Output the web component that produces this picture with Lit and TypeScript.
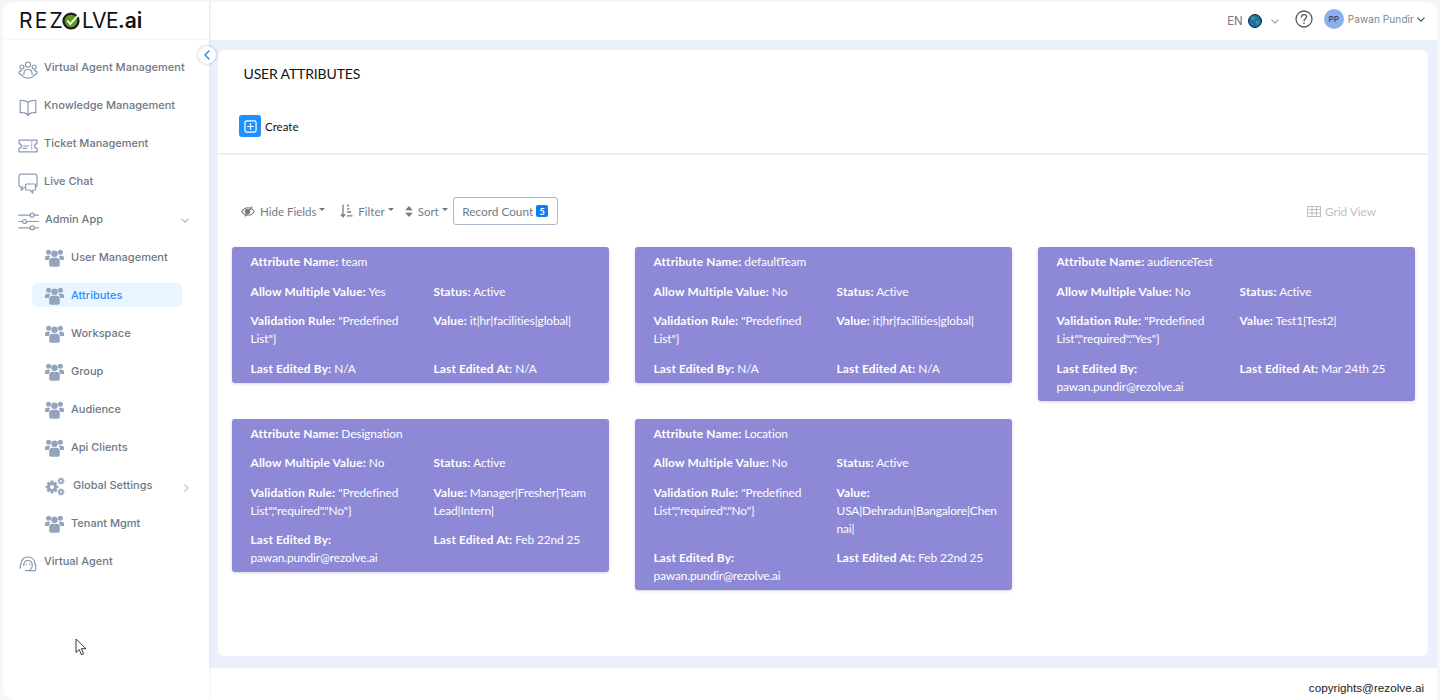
import { LitElement, html, css, svg } from "lit";
import { customElement } from "lit/decorators.js";

const ic = (w: number, h: number, vb: string, body: unknown, cls = "") =>
  html`<svg class=${cls} width=${w} height=${h} viewBox=${vb} aria-hidden="true">${body}</svg>`;

const stroke = (b: unknown) => svg`<g fill="none" stroke="currentColor" stroke-width="1.200" stroke-linecap="round" stroke-linejoin="round">${b}</g>`;

const icons: Record<string, () => unknown> = {
  agents: () => ic(20, 18, "0 0 20 18", stroke(svg`
    <circle cx="10" cy="3.600" r="2.600"/><circle cx="3.900" cy="6" r="2"/><circle cx="16.100" cy="6" r="2"/>
    <path d="M5.800 13.500c0-3.200 1.900-5 4.200-5s4.200 1.800 4.200 5"/>
    <path d="M3.600 9.300C2 9.500 1 10.700 1 12.200c0 .9.800 1.300 2 1.500M16.400 9.300c1.600.2 2.600 1.400 2.600 2.900 0 .9-.8 1.300-2 1.500"/>
    <path d="M3.400 13.800c1.400 2.400 4 3.300 6.600 3.300s5.200-.9 6.600-3.300"/>`)),
  book: () => ic(18, 17, "0 0 18 17", stroke(svg`
    <path d="M9 3.200C7.400 1.800 4.500 1.300 1.200 1.500v12.200c3.200-.2 6 .3 7.800 1.700 1.800-1.400 4.600-1.900 7.800-1.700V1.500C13.500 1.300 10.600 1.800 9 3.200z"/>
    <path d="M9 3.200v12.200M7.800 15.400 9 16.500l1.200-1.100"/>`)),
  ticket: () => ic(20, 14, "0 0 20 14", stroke(svg`
    <path d="M1 1.200h18v3.400a2.400 2.400 0 0 0 0 4.800v3.400H1V9.400a2.400 2.400 0 0 0 0-4.800z"/>
    <path d="M13.700 2.800v1M13.700 5.800v1M13.700 8.800v1M5 7h5.500M5 9.400h3.500"/>`)),
  chat: () => ic(21, 22, "0 0 21 22", stroke(svg`
    <path d="M4.500 13.900H2.900a1.900 1.900 0 0 1-1.900-1.900V3A1.900 1.900 0 0 1 2.900 1.100h14.200A1.900 1.900 0 0 1 19 3v9a1.900 1.900 0 0 1-1.900 1.900"/>
    <path d="M3.300 13.900v3.400l3-2.700"/>
    <path d="M8.500 11h8.200c.6 0 1 .4 1 1v4c0 .6-.4 1-1 1h-1.900v3.100L12 17H8.500c-.6 0-1-.4-1-1v-4c0-.6.4-1 1-1z"/>`)),
  sliders: () => ic(21, 19, "0 0 21 19", stroke(svg`
    <path d="M.7 3.200h11.500M16.300 3.200h4M.7 9.500h3.800M8.500 9.500h11.800M.7 15.800h11.500M16.300 15.800h4"/>
    <circle cx="14.200" cy="3.200" r="2"/><circle cx="6.500" cy="9.500" r="2"/><circle cx="14.200" cy="15.800" r="2"/>`)),
  users: () => ic(19, 18, "0 0 19 18", svg`<g fill="currentColor">
    <circle cx="3.600" cy="3.300" r="2.500"/><circle cx="15.400" cy="3.300" r="2.500"/><circle cx="9.500" cy="4.700" r="3.300"/>
    <path d="M0 11V8.800c0-1.300 1-2 2-2h2.600c.3 0 .6 0 .8.200-.9.900-1.300 2.200-1.300 4H0zM19 11V8.800c0-1.300-1-2-2-2h-2.600c-.3 0-.6 0-.8.200.9.900 1.300 2.200 1.300 4H19z"/>
    <path d="M4.200 16v-3.800c0-2.300 1.300-3.500 3-3.500h4.600c1.700 0 3 1.200 3 3.500V16c0 1-.8 1.700-1.700 1.700H5.900c-.9 0-1.700-.7-1.700-1.700z"/></g>`),
  gears: () => ic(20, 19, "0 0 20 19", svg`
    <g fill="none" stroke="currentColor"><circle cx="7" cy="10" r="3.600" stroke-width="3"/>
    <path stroke-width="2.600" d="M7 3.600v2M7 14.400v2M.6 10h2M11.400 10h2M2.500 5.500l1.400 1.400M10.100 13.100l1.400 1.400M2.500 14.500l1.400-1.400M10.100 6.900l1.400-1.400"/>
    <circle cx="16" cy="4" r="1.900" stroke-width="1.600"/><path stroke-width="1.400" d="M16 .6v1M16 6.400v1M12.600 4h1M18.400 4h1M13.600 1.600l.7.700M17.700 5.700l.7.700M13.600 6.400l.7-.7M17.700 2.300l.7-.7"/>
    <circle cx="16" cy="15" r="1.900" stroke-width="1.600"/><path stroke-width="1.400" d="M16 11.600v1M16 17.400v1M12.600 15h1M18.400 15h1M13.600 12.600l.7.700M17.700 16.700l.7.700M13.600 17.400l.7-.7M17.700 13.300l.7-.7"/></g>`),
  headset: () => ic(18, 16, "0 0 18 16", stroke(svg`
    <path d="M2 8.500C2 3.900 4.900 1 9 1s7 2.900 7 7.500"/>
    <path d="M4.700 9.500C4.700 6.200 6.500 4.400 9 4.400s4.300 1.800 4.300 5.100c0 2-1 3.600-2.300 4.500"/>
    <path d="M1.300 8.500v3.800M16.700 8.500v5c0 .7-.4 1.100-1 1.100H6.500"/>
    <path d="M7.300 8.200h.1M10.700 8.200h.1" stroke-width="1.400"/>`)),
};

const chev = (dir: "down" | "right" | "left", cls: string) => {
  const d = dir === "down" ? "M1 1l4 4 4-4" : dir === "right" ? "M1 1l4 4-4 4" : "M5 1 1 5l4 4";
  const [w, h] = dir === "down" ? [10, 6] : [6, 10];
  const [dw, dh] = dir === "down" ? [8, 5] : dir === "right" ? [5, 8] : [6, 10];
  return html`<svg class=${cls} width=${dw} height=${dh} viewBox="0 0 ${w} ${h}" fill="none" stroke="currentColor" stroke-width="1.300" stroke-linecap="round" stroke-linejoin="round" aria-hidden="true"><path d=${d}/></svg>`;
};

type Nav = { icon: string; label: string; sub?: boolean; active?: boolean; trail?: "down" | "right" };
const NAV: Nav[] = [
  { icon: "agents", label: "Virtual Agent Management" },
  { icon: "book", label: "Knowledge Management" },
  { icon: "ticket", label: "Ticket Management" },
  { icon: "chat", label: "Live Chat" },
  { icon: "sliders", label: "Admin App", trail: "down" },
  { icon: "users", label: "User Management", sub: true },
  { icon: "users", label: "Attributes", sub: true, active: true },
  { icon: "users", label: "Workspace", sub: true },
  { icon: "users", label: "Group", sub: true },
  { icon: "users", label: "Audience", sub: true },
  { icon: "users", label: "Api Clients", sub: true },
  { icon: "gears", label: "Global Settings", sub: true, trail: "right" },
  { icon: "users", label: "Tenant Mgmt", sub: true },
  { icon: "headset", label: "Virtual Agent" },
];

type Card = { name: string; multi: string; rule: string; value: string; by: string; at: string };
const CARDS: Card[] = [
  { name: "team", multi: "Yes", rule: '"Predefined List"}', value: "it|hr|facilities|global|", by: "N/A", at: "N/A" },
  { name: "defaultTeam", multi: "No", rule: '"Predefined List"}', value: "it|hr|facilities|global|", by: "N/A", at: "N/A" },
  { name: "audienceTest", multi: "No", rule: '"Predefined List","required"."Yes"}', value: "Test1|Test2|", by: "pawan.pundir@rezolve.ai", at: "Mar 24th 25" },
  { name: "Designation", multi: "No", rule: '"Predefined List","required"."No"}', value: "Manager|Fresher|Team Lead|Intern|", by: "pawan.pundir@rezolve.ai", at: "Feb 22nd 25" },
  { name: "Location", multi: "No", rule: '"Predefined List","required"."No"}', value: "USA|Dehradun|Bangalore|Chennai|", by: "pawan.pundir@rezolve.ai", at: "Feb 22nd 25" },
];

@customElement("app-root")
export class AppRoot extends LitElement {
  static styles = css`
    :host { display: block; width: 1440px; height: 700px; overflow: hidden; background: #f6f6f6; font-family: Inter, "Liberation Sans", sans-serif; }
    * { box-sizing: border-box; }
    .shell { position: relative; width: 1434px; height: 698px; margin: 2px 3px 0; display: grid; grid-template-columns: 206px 1fr; background: #eaf1fb; border-radius: 10px 10px 0 10px; overflow: hidden; }

    .side { display: flex; flex-direction: column; background: #fff; box-shadow: 1px 0 3px rgba(120,140,170,.12); z-index: 1; }
    .logo { height: 38px; flex: none; display: flex; align-items: center; padding-left: 16px; font: 400 21px/1 Inter, sans-serif; color: #111; border-bottom: 1px solid #f4f6f9; }
    .logo svg { margin: 0 1px 0 -3px; }
    .rez { letter-spacing: 2.200px; }
    .lve { letter-spacing: -.5px; }
    .logo b { font-weight: 600; letter-spacing: 0; }
    .nav { list-style: none; margin: 0; padding: 8px 0 0; display: flex; flex-direction: column; }
    .item { height: 38px; display: flex; align-items: center; padding-left: 15px; color: #6e7886; font-size: 11px; font-weight: 500; position: relative; }
    .item .ico { width: 26px; flex: none; display: flex; justify-content: center; color: #8a9ab2; margin-top: 5px; margin-right: 0; transform: translateX(-3px); }
    .item.sub { padding-left: 29px; }
    .item.sub .ico { width: 39px; color: #94a4bc; margin-top: 2px; justify-content: flex-start; padding-left: 13px; transform: none; }
    .item.active { color: #2f8fff; }
    .item.active::before { content: ""; position: absolute; left: 29px; top: 7px; width: 150px; height: 24px; background: #e9f5ff; border-radius: 5px; }
    .item.active > * { position: relative; }
    .item .trail { position: absolute; right: 20px; top: 18px; color: #a9b0ba; }
    .item.gear .lbl { margin-left: 2px; }
    .item.admin .lbl { margin-left: 1px; }

    .col { display: flex; flex-direction: column; min-width: 0; }
    .top { height: 38px; flex: none; background: #fff; display: flex; align-items: center; justify-content: flex-end; padding: 0 12px 4px 0; color: #6e7886; border-left: 1px solid #eef0f3; }
    .en { font-size: 11.500px; margin: 4px 5px 0 0; color: #6e7886; }
    .globe { margin: 4px 9px 0 0; }
    .top .dn { color: #8a9ab2; margin: 4px 16px 0 0; }
    .help { margin-right: 11px; color: #555; }
    .ava { width: 20px; height: 20px; border-radius: 50%; background: #8ab0ee; color: #3b4b66; font-size: 8px; font-weight: 600; display: flex; align-items: center; justify-content: center; margin-right: 4px; }
    .who { font-size: 10px; color: #7b8490; margin-right: 3px; letter-spacing: .1px; }
    .top .dk { color: #444; }

    .body { flex: 1; min-height: 0; padding: 10px 9px 12px; }
    .panel { height: 100%; background: #fff; border-radius: 6px; display: flex; flex-direction: column; font-family: Lato, "Open Sans", sans-serif; }
    .phead { height: 105px; flex: none; border-bottom: 2px solid #eceef1; padding: 15px 0 0 25.500px; display: flex; flex-direction: column; }
    h1 { margin: 0; font-size: 14px; line-height: 18px; font-weight: 400; color: #111; letter-spacing: -.15px; }
    .create { display: flex; align-items: center; gap: 4px; margin: 32px 0 0 -4.500px; font-size: 11.500px; color: #111; }
    .plus { width: 22px; height: 22px; background: #1e90ff; border-radius: 3px; display: flex; align-items: center; justify-content: center; }
    .tools { height: 92px; flex: none; display: flex; align-items: center; padding: 20px 52px 0 23px; color: #737b84; font-size: 11.500px; }
    .tool { display: flex; align-items: center; gap: 5px; }
    .tool i { width: 0; height: 0; border: 3px solid transparent; border-top-color: #6b7480; border-bottom: 0; margin: -3px 0 0 -2px; }
    .hide { margin-right: 15px; }
    .flt { margin-right: 11px; }
    .srt { margin-right: 5px; }
    .rc { height: 28px; width: 105px; border: 1px solid #a9b8c9; border-radius: 3px; display: flex; align-items: center; justify-content: center; gap: 3px; font-size: 11.800px; }
    .rc span { min-width: 12px; height: 12px; background: #0d7ff2; color: #fff; border-radius: 2px; font-size: 9px; font-weight: 700; display: flex; align-items: center; justify-content: center; }
    .grid-v { margin-left: auto; display: flex; align-items: center; gap: 4px; color: #bcc0c5; font-size: 11.800px; }

    .cards { display: grid; grid-template-columns: repeat(3, 377px); column-gap: 26px; row-gap: 18px; padding-left: 14px; align-items: start; }
    .card { background: #8d89d6; border-radius: 3px; color: #fff; padding: 6px 0 5px 18.500px; display: grid; grid-template-columns: 183px 183px; column-gap: 0; row-gap: 11.500px; box-shadow: 0 1px 3px rgba(90,90,160,.25); font-size: 11.900px; line-height: 18px; letter-spacing: -.12px; }
    .f { padding-right: 18px; overflow-wrap: break-word; min-width: 0; }
    .f.full { grid-column: 1 / -1; }
    .f b { font-weight: 700; letter-spacing: .15px; }

    .foot { height: 32px; flex: none; background: #fff; display: flex; align-items: center; justify-content: flex-end; padding: 6px 13px 0 0; font: 11.700px "Liberation Sans", Arial, sans-serif; color: #222; }
    .toggle { position: absolute; left: 195px; top: 44px; width: 18px; height: 18px; background: #fff; border-radius: 50%; box-shadow: 0 0 3px rgba(80,90,110,.45); color: #1e80f0; display: flex; align-items: center; justify-content: center; z-index: 3; }
    .cursor { position: absolute; left: 72px; top: 636px; z-index: 3; }
  `;

  private card(c: Card) {
    return html`<article class="card">
      <div class="f full"><b>Attribute Name:</b> ${c.name}</div>
      <div class="f"><b>Allow Multiple Value:</b> ${c.multi}</div>
      <div class="f"><b>Status:</b> Active</div>
      <div class="f"><b>Validation Rule:</b> ${c.rule}</div>
      <div class="f"><b>Value:</b> ${c.value}</div>
      <div class="f"><b>Last Edited By:</b> ${c.by}</div>
      <div class="f"><b>Last Edited At:</b> ${c.at}</div>
    </article>`;
  }

  render() {
    return html`<div class="shell">
      <aside class="side">
        <div class="logo"><span class="rez">REZ</span><svg width="19" height="19" viewBox="0 0 19 19" aria-hidden="true"><circle cx="9" cy="10" r="8.600" fill="#1a1a1a"/><circle cx="9" cy="10" r="6.300" fill="#5d9a1e"/><path d="M5.300 9.500l3 3.600L17.500 2.500" fill="none" stroke="#fff" stroke-width="1.800"/></svg><span class="lve">LVE</span><b>.ai</b></div>
        <ul class="nav">
          ${NAV.map((n) => html`<li class="item ${n.sub ? "sub" : ""} ${n.active ? "active" : ""} ${n.icon === "gears" ? "gear" : ""} ${n.icon === "sliders" ? "admin" : ""}">
            <span class="ico">${icons[n.icon]()}</span>
            <span class="lbl">${n.label}</span>
            ${n.trail ? chev(n.trail, "trail") : ""}
          </li>`)}
        </ul>
      </aside>
      <div class="col">
        <header class="top">
          <span class="en">EN</span>
          <svg class="globe" width="14" height="14" viewBox="0 0 14 14" aria-hidden="true"><circle cx="7" cy="7" r="6.500" fill="#1c6fb5" stroke="#123" stroke-width="1"/><path d="M3 3.500c1.500-1.200 3.500-1.300 4.500-.6.300 1.200-1 1.500-1.500 2.400-.5.800-1.300.8-2 .4-.7-.4-1.200-1.400-1-2.200zM7.500 6.500c1.400-.3 3.400.2 3.800 1.300-.3 1.500-1.400 3-2.600 3.300-.7-1-.2-2-.8-2.800-.3-.6-.7-1.300-.4-1.800z" fill="#3fa24a"/></svg>
          ${chev("down", "dn")}
          <svg class="help" width="18" height="18" viewBox="0 0 18 18" fill="none" stroke="currentColor" stroke-width="1.300" stroke-linecap="round" aria-hidden="true"><circle cx="9" cy="9" r="8"/><path d="M6.500 7c.1-1.500 1.200-2.300 2.500-2.300 1.400 0 2.500.9 2.500 2.100 0 1.800-2.400 1.900-2.500 3.800"/><path d="M9 13v.1" stroke-width="1.700"/></svg>
          <span class="ava">PP</span>
          <span class="who">Pawan Pundir</span>
          ${chev("down", "dk")}
        </header>
        <main class="body">
          <section class="panel">
            <div class="phead">
              <h1>USER ATTRIBUTES</h1>
              <div class="create">
                <span class="plus"><svg width="13" height="13" viewBox="0 0 14 14" fill="none" stroke="#fff" stroke-width="1.300" aria-hidden="true"><rect x="1" y="1" width="12" height="12" rx="2"/><path d="M7 3.500v7M3.500 7h7"/></svg></span>
                Create
              </div>
            </div>
            <div class="tools">
              <div class="tool hide"><svg width="14" height="11" viewBox="0 0 14 11" fill="none" stroke="currentColor" stroke-width="1.100" aria-hidden="true"><path d="M.7 5.500C2.300 3 4.500 1.700 7 1.700s4.700 1.300 6.300 3.800C11.700 8 9.500 9.300 7 9.300S2.300 8 .7 5.500z"/><circle cx="6.500" cy="5.500" r="2.200" fill="currentColor"/><path d="M11 .6 4 10.400" stroke-width="1.300"/></svg>Hide Fields<i></i></div>
              <div class="tool flt"><svg width="13" height="14" viewBox="0 0 13 14" fill="none" stroke="currentColor" stroke-width="1.300" aria-hidden="true"><path d="M3 .5v12M.8 10.300 3 12.700l2.200-2.400M7 1.500h2M7 4.800h2.500M7 8h4M7 11.800h5.500"/></svg>Filter<i></i></div>
              <div class="tool srt"><svg width="8" height="11" viewBox="0 0 8 11" fill="currentColor" aria-hidden="true"><path d="M4 0l3.800 4.200H.2zM4 11 .2 6.800h7.600z"/></svg>Sort<i></i></div>
              <div class="rc">Record Count <span>5</span></div>
              <div class="grid-v"><svg width="14" height="11" viewBox="0 0 14 11" fill="none" stroke="currentColor" stroke-width="1" aria-hidden="true"><rect x=".5" y=".5" width="13" height="10"/><path d="M.5 3.500h13M.5 7h13M5 .5v10M9.500 .5v10"/></svg>Grid View</div>
            </div>
            <div class="cards">${CARDS.map((c) => this.card(c))}</div>
          </section>
        </main>
        <footer class="foot">copyrights@rezolve.ai</footer>
      </div>
      <div class="toggle">${chev("left", "")}</div>
      <svg class="cursor" width="13" height="19" viewBox="0 0 13 19" fill="#fff" stroke="#222" stroke-width=".9" aria-hidden="true"><path d="M1 1v13.500l3.200-3 2.200 5.300 2.200-1-2.200-5.100h4.500z"/></svg>
    </div>`;
  }
}
